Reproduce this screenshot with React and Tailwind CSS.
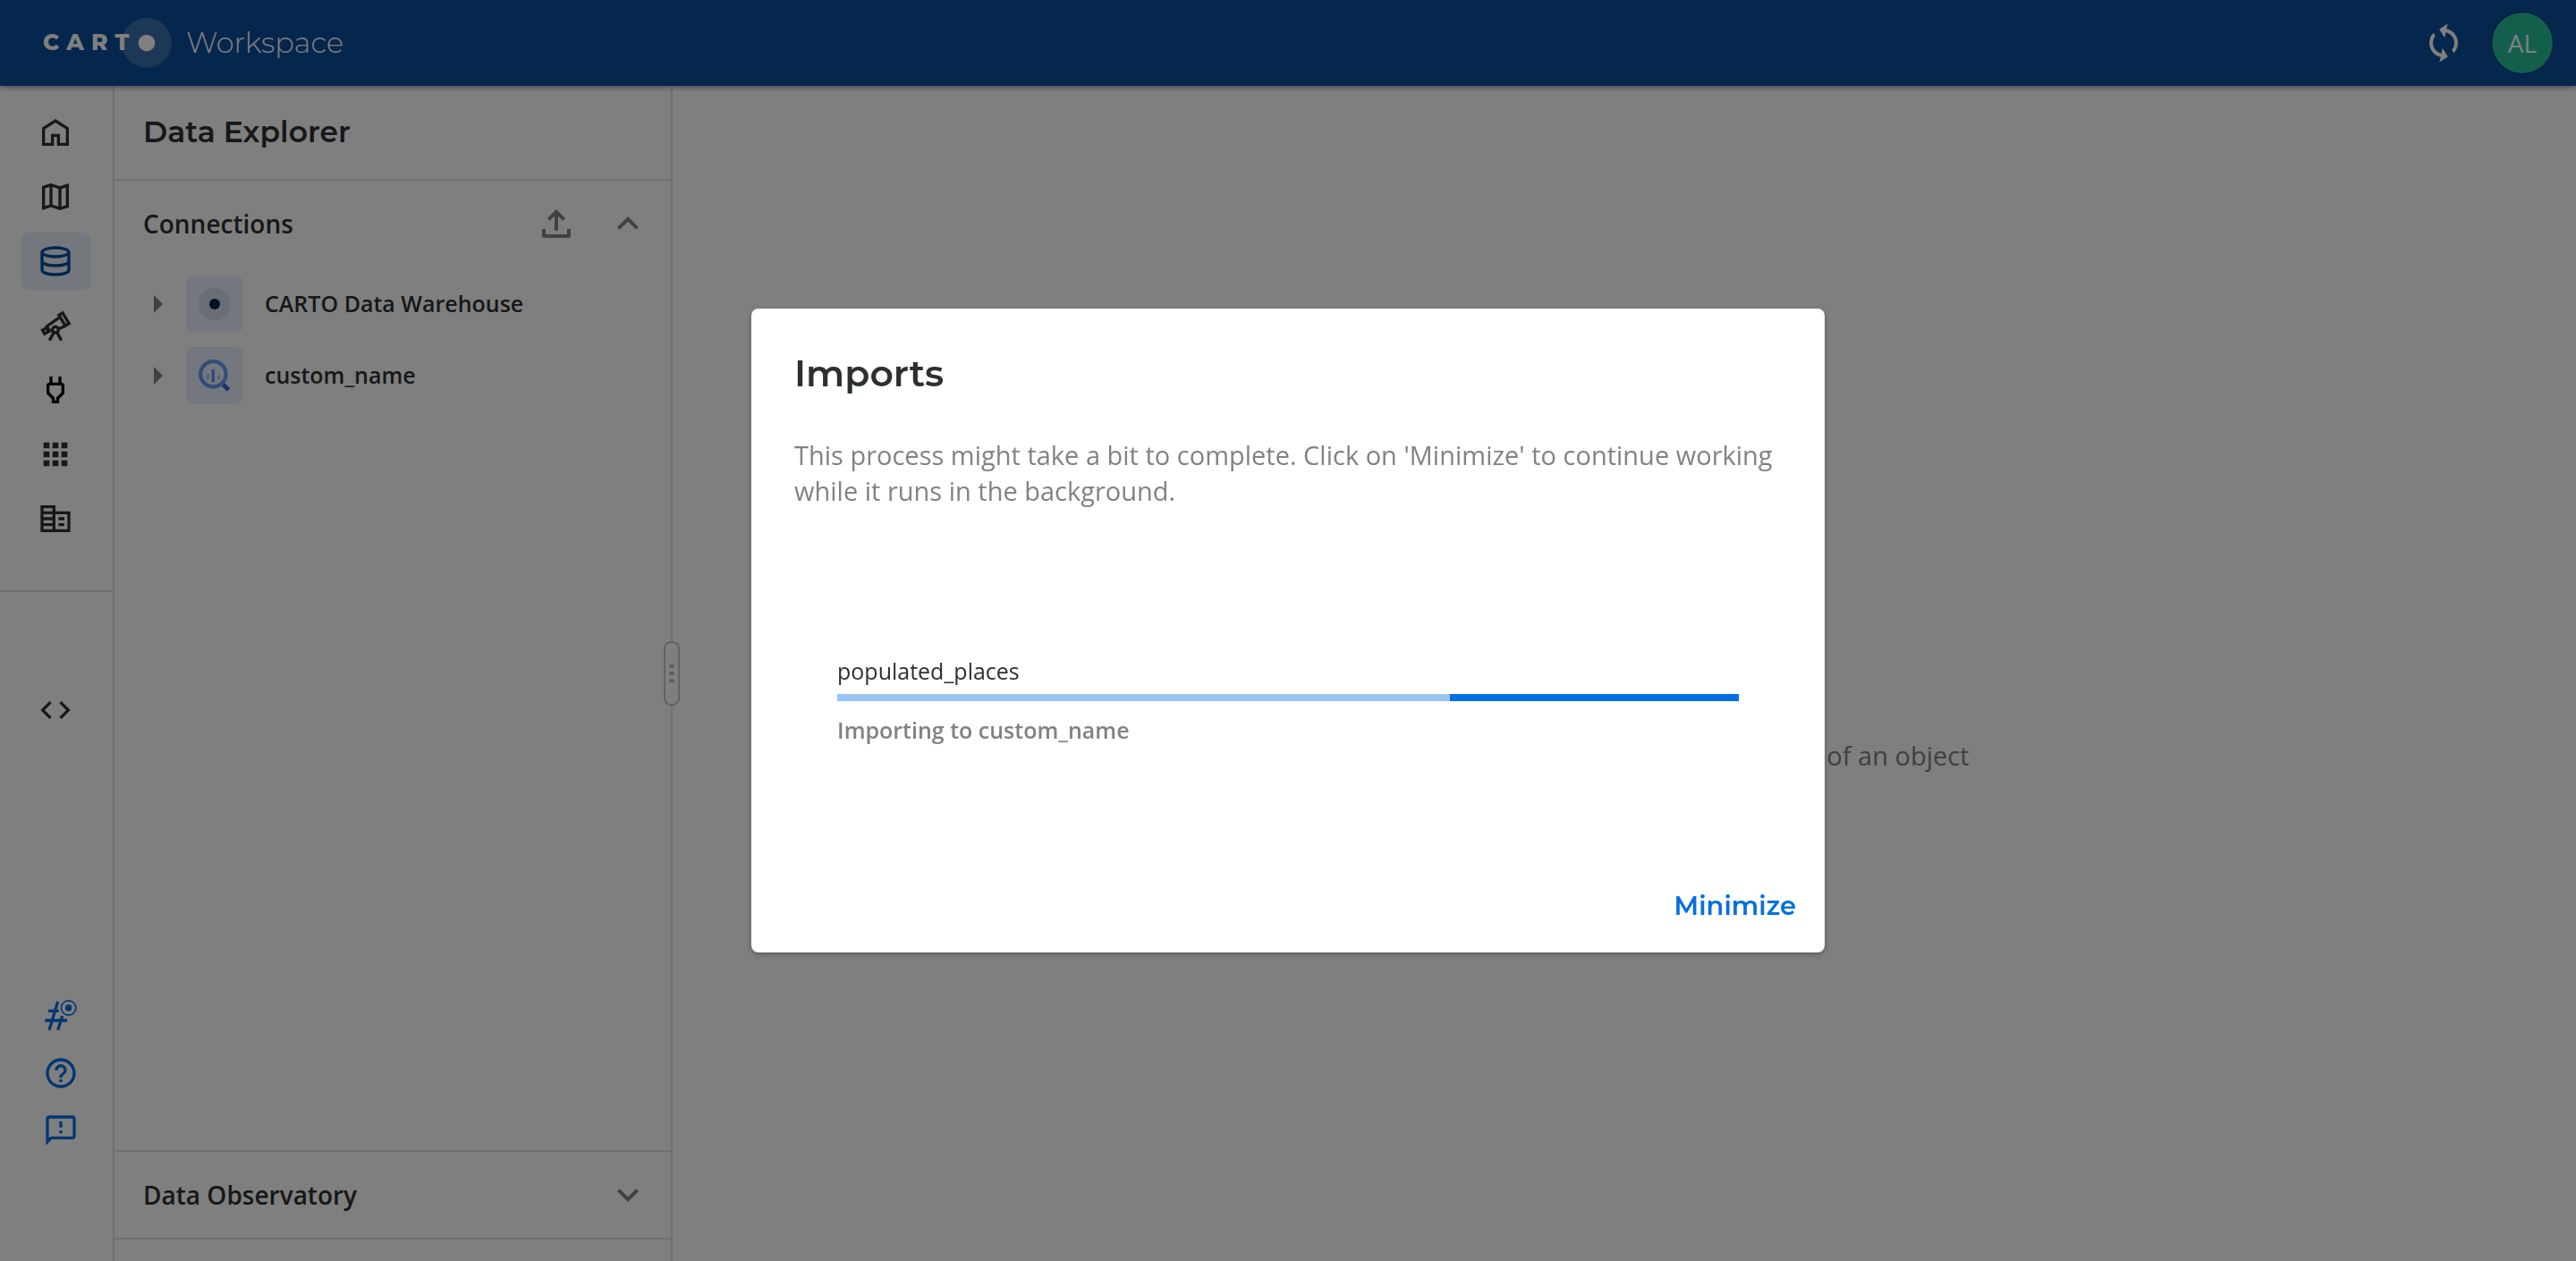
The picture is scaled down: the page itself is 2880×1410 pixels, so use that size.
import React from "react";

function Icon({ children, className = "size-10" }) {
  return (
    <svg viewBox="0 0 24 24" className={className} fill="currentColor" aria-hidden="true">
      {children}
    </svg>
  );
}

const outline = { fill: "none", stroke: "currentColor", strokeWidth: 2 };

const HomeIcon = () => (
  <Icon>
    <path {...outline} d="M4 20V9.4l8-5.2 8 5.2V20h-6v-6h-4v6z" />
  </Icon>
);
const MapIcon = () => (
  <Icon>
    <path {...outline} d="M4 5.6L9 4l6 2 5-1.6v14L15 20l-6-2-5 1.6zM9 4v14M15 6v14" />
  </Icon>
);
const DatabaseIcon = () => (
  <Icon>
    <ellipse {...outline} cx="12" cy="6" rx="9" ry="3" />
    <path {...outline} d="M3 6v12c0 1.7 4 3 9 3s9-1.3 9-3V6M3 12c0 1.7 4 3 9 3s9-1.3 9-3" />
  </Icon>
);
const TelescopeIcon = () => (
  <Icon>
    <g {...outline}>
      <path d="M14.3 5l2.500-1.500L21.100 10.600l-2.500 1.500z" />
      <path d="M14.300 6.800L6.200 12.600l1.700 2.900 2.200-.5M14 14.200l4.600-1.900" />
      <path d="M3.300 15.100l2.600-1.500 1.400 2.500-2.600 1.400z" />
      <circle cx="12" cy="14.800" r="2" />
      <path d="M10.900 16.700L8 22M13.100 16.700L16 22" />
    </g>
  </Icon>
);
const PlugIcon = () => (
  <Icon>
    <path d="M16 9v4.660l-3.500 3.510V19h-1v-1.830L8 13.650V9h8m0-6h-2v4h-4V3H8v4h-.01C6.900 6.990 6 7.890 6 8.980V14.500L9.500 18v3h5v-3l3.500-3.510V9c0-1.100-.9-2-2-2V3z" />
  </Icon>
);
const AppsIcon = () => (
  <Icon>
    <path d="M4 4h4v4H4zM10 4h4v4h-4zM16 4h4v4h-4zM4 10h4v4H4zM10 10h4v4h-4zM16 10h4v4h-4zM4 16h4v4H4zM10 16h4v4h-4zM16 16h4v4h-4z" />
  </Icon>
);
const BuildingIcon = () => (
  <Icon>
    <path
      fillRule="evenodd"
      d="M2 3h10v4h10v14H2zM4 5v2h6V5zM4 9v2h6V9zM4 13v2h6v-2zM4 17v2h6v-2zM12 9v10h8V9zM14 11h4v2h-4zM14 15h4v2h-4z"
    />
  </Icon>
);
const CodeIcon = () => (
  <Icon>
    <path d="M9.400 16.600L4.800 12l4.600-4.600L8 6l-6 6 6 6 1.400-1.400zm5.200 0l4.600-4.600-4.600-4.600L16 6l6 6-6 6-1.400-1.400z" />
  </Icon>
);
const HashIcon = () => (
  <Icon>
    <path {...outline} d="M10 2.400L4.200 21.400M13 12l-3 9.400M3.600 8.600h7M1.400 15h14.800" />
    <circle {...outline} strokeWidth="1" cx="17.200" cy="6.600" r="4.900" />
    <circle cx="17.200" cy="6.600" r="2.200" />
  </Icon>
);
const HelpIcon = () => (
  <Icon>
    <path d="M11 18h2v-2h-2v2zm1-16C6.480 2 2 6.480 2 12s4.480 10 10 10 10-4.480 10-10S17.520 2 12 2zm0 18c-4.410 0-8-3.590-8-8s3.590-8 8-8 8 3.590 8 8-3.590 8-8 8zm0-14c-2.210 0-4 1.790-4 4h2c0-1.100.9-2 2-2s2 .9 2 2c0 2-3 1.750-3 5h2c0-2.250 3-2.500 3-5 0-2.210-1.790-4-4-4z" />
  </Icon>
);
const FeedbackIcon = () => (
  <Icon>
    <path d="M20 2H4c-1.100 0-1.990.9-1.990 2L2 22l4-4h14c1.100 0 2-.9 2-2V4c0-1.100-.9-2-2-2zm0 14H5.170l-.59.590-.58.580V4h16v12zm-9-4h2v2h-2zm0-6h2v4h-2z" />
  </Icon>
);
const SyncIcon = () => (
  <Icon className="size-12">
    <path
      transform="rotate(12 12 12)"
      d="M12 4V1L8 5l4 4V6c3.310 0 6 2.690 6 6 0 1.010-.25 1.970-.7 2.800l1.460 1.460C19.540 15.030 20 13.570 20 12c0-4.420-3.580-8-8-8zm0 14c-3.310 0-6-2.690-6-6 0-1.010.25-1.970.7-2.800L5.240 7.740C4.460 8.970 4 10.430 4 12c0 4.420 3.580 8 8 8v3l4-4-4-4v3z"
    />
  </Icon>
);
const UploadIcon = () => (
  <Icon className="size-12">
    <path {...outline} d="M12 16V5.500M7.700 9.700L12 5.400l4.300 4.300" />
    <path {...outline} strokeLinejoin="round" d="M5 15v4h14v-4" />
  </Icon>
);
const ChevronUp = () => (
  <Icon className="size-12">
    <path d="M12 8l-6 6 1.410 1.410L12 10.830l4.590 4.580L18 14z" />
  </Icon>
);
const ChevronDown = () => (
  <Icon className="size-12">
    <path d="M16.590 8.590L12 13.170 7.410 8.590 6 10l6 6 6-6z" />
  </Icon>
);
const ArrowRight = () => (
  <Icon className="size-12">
    <path d="M10 17l5-5-5-5v10z" />
  </Icon>
);

const CartoMark = () => (
  <svg viewBox="0 0 36 36" className="size-9" aria-hidden="true">
    <circle cx="18" cy="18" r="18" fill="#162945" fillOpacity="0.1" />
    <circle cx="18" cy="18" r="6" fill="#0b2540" />
  </svg>
);
const BigQueryMark = () => (
  <svg viewBox="0 0 36 36" className="size-9" aria-hidden="true">
    <path d="M27.500 28l6 6" stroke="#3367d6" strokeWidth="5" />
    <circle cx="16.400" cy="16.300" r="14.200" fill="none" stroke="#6299f0" strokeWidth="4.200" />
    <path d="M16.200 11v14.500" stroke="#5a94ee" strokeWidth="3.400" />
    <path d="M10.300 16v6.500M22.500 17.500v5" stroke="#a8c4f2" strokeWidth="3" />
  </svg>
);

const heading = "font-['Montserrat','Inter',sans-serif]";

const railItems = [
  { label: "Home", icon: HomeIcon, style: "text-[#2c3032]" },
  { label: "Maps", icon: MapIcon, style: "text-[#2c3032]" },
  { label: "Data Explorer", icon: DatabaseIcon, style: "bg-[#e8f0fc] text-[#024d9e]" },
  { label: "Data Observatory", icon: TelescopeIcon, style: "text-[#2c3032]" },
  { label: "Connections", icon: PlugIcon, style: "text-black" },
  { label: "Applications", icon: AppsIcon, style: "text-[#2c3032]" },
  { label: "Organization", icon: BuildingIcon, style: "text-[#2c3032]" },
];

const helpItems = [
  { label: "Slack community", icon: HashIcon },
  { label: "Help", icon: HelpIcon },
  { label: "Feedback", icon: FeedbackIcon },
];

function Header() {
  return (
    <header className="z-10 flex h-24 shrink-0 items-center justify-between bg-[#0a4c9a] pr-[26px] pl-12 text-white shadow-[0_2px_6px_rgba(0,0,0,0.4)]">
      <a href="#home" aria-label="CARTO Workspace" className="flex items-center">
        <span className={`flex items-center gap-2 text-[25px] font-extrabold ${heading}`}>
          <span>C</span>
          <span>A</span>
          <span>R</span>
          <span>T</span>
        </span>
        <svg viewBox="0 0 56 56" className="-ml-2 size-14" aria-hidden="true">
          <circle cx="28" cy="28" r="28" fill="#fff" fillOpacity="0.2" />
          <circle cx="28" cy="28" r="9.300" fill="#fff" />
        </svg>
        <span className={`ml-4 text-[32px] font-light ${heading}`}>Workspace</span>
      </a>
      <div className="flex items-center gap-[30px]">
        <button type="button" aria-label="Refresh">
          <SyncIcon />
        </button>
        <button
          type="button"
          className="flex size-[68px] items-center justify-center rounded-full bg-[#26be98] text-[28px] outline outline-[#0a3f80]"
        >
          AL
        </button>
      </div>
    </header>
  );
}

function Rail() {
  return (
    <nav className="flex w-32 shrink-0 flex-col border-r-2 border-[#e0e0e1]">
      <ul className="flex flex-col gap-2 border-b-2 border-[#e0e0e1] px-6 pt-5 pb-12">
        {railItems.map(({ label, icon: Glyph, style }) => (
          <li key={label}>
            <a
              href="#nav"
              aria-label={label}
              className={`flex h-16 items-center rounded-lg pl-[18px] ${style}`}
            >
              <Glyph />
            </a>
          </li>
        ))}
      </ul>
      <a
        href="#developers"
        aria-label="Developers"
        className="mx-6 mt-[100px] flex h-16 items-center pl-[18px] text-[#2c3032]"
      >
        <CodeIcon />
      </a>
      <ul className="mt-auto mb-[114px] flex flex-col pl-12 text-[#036fe2]">
        {helpItems.map(({ label, icon: Glyph }) => (
          <li key={label}>
            <a href="#help" aria-label={label} className="flex h-16 items-center">
              <Glyph />
            </a>
          </li>
        ))}
      </ul>
    </nav>
  );
}

function Connection({ name, mark }) {
  return (
    <li className="flex h-16 items-center">
      <button type="button" aria-label={`Expand ${name}`} className="text-[#808384]">
        <ArrowRight />
      </button>
      <span className="ml-2 flex size-16 items-center justify-center rounded-lg bg-[#e8f0fc]">
        {mark}
      </span>
      <span className="ml-6 text-[25px] font-semibold">{name}</span>
    </li>
  );
}

function Explorer() {
  return (
    <aside className="relative flex w-[624px] shrink-0 flex-col border-r-2 border-[#e0e0e1]">
      <h1 className={`flex h-[106px] items-center border-b-2 border-[#e0e0e1] px-8 text-[33px] font-semibold ${heading}`}>
        Data Explorer
      </h1>
      <section className="flex flex-1 flex-col">
        <div className="flex h-24 items-center pr-6 pl-8">
          <h2 className="flex-1 text-[28px] font-semibold">Connections</h2>
          <div className="flex gap-8 text-[#808384]">
            <button type="button" aria-label="Import data">
              <UploadIcon />
            </button>
            <button type="button" aria-label="Collapse connections">
              <ChevronUp />
            </button>
          </div>
        </div>
        <ul className="flex flex-col gap-4 px-6 pt-2.5">
          <Connection name="CARTO Data Warehouse" mark={<CartoMark />} />
          <Connection name="custom_name" mark={<BigQueryMark />} />
        </ul>
      </section>
      <section className="mb-6 flex h-[100px] items-center border-y-2 border-[#e0e0e1] pr-6 pl-8">
        <h2 className="flex-1 text-[28px] font-semibold">Data Observatory</h2>
        <button type="button" aria-label="Expand Data Observatory" className="text-[#808384]">
          <ChevronDown />
        </button>
      </section>
      <div className="absolute inset-y-0 -right-2.5 flex items-center">
        <button
          type="button"
          aria-label="Resize panel"
          className="flex h-[72px] w-[18px] flex-col items-center justify-center gap-1 rounded-lg border-2 border-[#c6c6c7] bg-white"
        >
          <span className="h-1 w-1.5 rounded-full bg-[#b8b8b9]" />
          <span className="h-1 w-1.5 rounded-full bg-[#b8b8b9]" />
          <span className="h-1 w-1.5 rounded-full bg-[#b8b8b9]" />
        </button>
      </div>
    </aside>
  );
}

function ImportsDialog() {
  return (
    <div className="fixed inset-0 z-20 flex items-center justify-center bg-black/50">
      <div
        role="dialog"
        aria-modal="true"
        aria-labelledby="imports-title"
        className="flex min-h-[720px] w-full max-w-[1200px] flex-col rounded-lg bg-white shadow-[0_2px_6px_rgba(0,0,0,0.3)]"
      >
        <h2
          id="imports-title"
          className={`px-12 pt-10 pb-10 text-[41px] leading-[64px] font-semibold ${heading}`}
        >
          Imports
        </h2>
        <p className="px-12 text-[29px] leading-10 text-[#808384]">
          This process might take a bit to complete. Click on 'Minimize' to continue working while it
          runs in the background.
        </p>
        <div className="flex flex-1 flex-col justify-center px-24 pt-9">
          <span id="import-name" className="text-[25px] leading-9">
            populated_places
          </span>
          <div
            role="progressbar"
            aria-labelledby="import-name"
            className="mt-2 flex h-2 justify-end bg-[#9ac5f3]"
          >
            <span className="w-[32%] bg-[#036fe2]" />
          </div>
          <span className="mt-3.5 text-[25px] leading-9 font-semibold text-[#808384]">
            Importing to custom_name
          </span>
        </div>
        <div className="flex justify-end p-4">
          <button
            type="button"
            className={`h-[72px] px-4 text-[29px] font-semibold text-[#036fe2] ${heading}`}
          >
            Minimize
          </button>
        </div>
      </div>
    </div>
  );
}

export default function App() {
  return (
    <div className="flex h-screen flex-col overflow-hidden bg-white font-['Open_Sans',sans-serif] text-[#2c3032]">
      <Header />
      <div className="flex min-h-0 flex-1">
        <Rail />
        <Explorer />
        <main className="flex flex-1 flex-col items-center justify-center gap-6 text-[#808384]">
          <Icon className="size-40 text-[#e0e0e1]">
            <ellipse {...outline} cx="12" cy="6" rx="9" ry="3" />
            <path {...outline} d="M3 6v12c0 1.700 4 3 9 3s9-1.300 9-3V6" />
          </Icon>
          <p className="text-[29px] leading-10">
            Use the menu on your left to view the details of an object
          </p>
        </main>
      </div>
      <ImportsDialog />
    </div>
  );
}
